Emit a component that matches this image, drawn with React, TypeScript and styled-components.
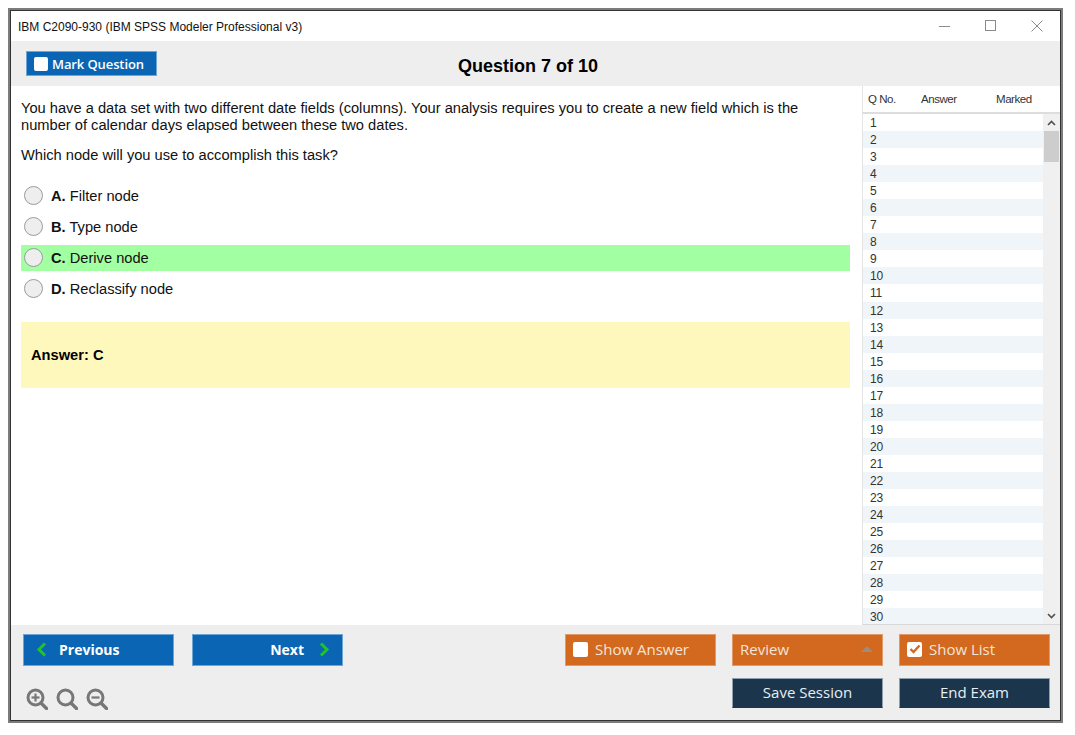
import React from 'react'
import styled, { createGlobalStyle } from 'styled-components'

const GlobalStyle = createGlobalStyle`
  html, body {
    margin: 0;
    padding: 0;
    background: #fff;
  }
  * {
    box-sizing: border-box;
  }
`

const Page = styled.div`
  width: 1075px;
  height: 735px;
  padding: 8px 12px 12px 8px;
`

const Frame = styled.div`
  width: 1055px;
  height: 715px;
  border: 2px solid #7c7c7c;
`

const Window = styled.div`
  height: 100%;
  border: 1px solid #333;
  display: flex;
  flex-direction: column;
  background: #fff;
  font-family: 'Liberation Sans', Arial, sans-serif;
  color: #111;
`

const TitleBar = styled.div`
  height: 30px;
  flex: none;
  display: flex;
  align-items: center;
  justify-content: space-between;
  padding: 1px 17px 0 7px;
  font-size: 12px;
`

const WindowControls = styled.div`
  display: flex;
  align-items: center;
  gap: 35px;
  height: 12px;
  margin-bottom: 2px;
`

const Toolbar = styled.div`
  height: 45px;
  flex: none;
  background: #eee;
  display: flex;
  align-items: center;
  padding-left: 15px;
`

const BlockButton = styled.div`
  display: flex;
  align-items: center;
  font-family: 'Open Sans', 'Noto Sans', sans-serif;
  color: #fff;
  border: 1px solid #6fa5d2;
  background: #0a66b4;
`

const MarkButton = styled(BlockButton)`
  width: 131px;
  height: 25px;
  padding-left: 7px;
  gap: 4px;
  font-size: 13px;
  font-weight: 600;
  letter-spacing: -0.1px;
`

const Box = styled.span<{ $ink: string; $size: number }>`
  width: ${p => p.$size}px;
  height: ${p => p.$size}px;
  flex: none;
  background: #fff;
  border-radius: 2px;
  display: flex;
  align-items: center;
  justify-content: center;
  color: ${p => p.$ink};
`

const ExamTitle = styled.h1`
  margin: 5px 0 0 301px;
  font-size: 18px;
  font-weight: 700;
  color: #000;
`

const Main = styled.div`
  flex: 1;
  min-height: 0;
  display: flex;
`

const QuestionPane = styled.div`
  width: 851px;
  flex: none;
  padding: 14px 12px 0 10px;
  font-size: 14.67px;
  line-height: 17px;
`

const Paragraph = styled.p`
  margin: 0 0 13px;
`

const Options = styled.div`
  margin-top: 19px;
  display: flex;
  flex-direction: column;
  gap: 5px;
`

const Option = styled.div<{ $correct?: boolean }>`
  height: 26px;
  display: flex;
  align-items: center;
  padding-left: 3px;
  gap: 8px;
  background: ${p => (p.$correct ? '#a2ffa2' : 'transparent')};
`

const Radio = styled.span`
  width: 19px;
  height: 19px;
  flex: none;
  margin-bottom: 2px;
  border-radius: 50%;
  border: 1px solid #9a9a9a;
  background: #eee;
`

const AnswerBox = styled.div`
  margin-top: 20px;
  height: 66px;
  display: flex;
  align-items: center;
  padding-left: 10px;
  background: #fff8bc;
  font-weight: 700;
  color: #000;
`

const ListPane = styled.div`
  flex: 1;
  min-width: 0;
  display: flex;
  flex-direction: column;
  border-left: 1px solid #e4e4e4;
  border-bottom: 1px solid #d8d8d8;
  font-size: 12px;
  letter-spacing: -0.2px;
  color: #333;
`

const ListHeader = styled.div`
  height: 28px;
  flex: none;
  display: grid;
  grid-template-columns: 53px 75px 1fr;
  align-items: center;
  padding-left: 5px;
  border-bottom: 2px solid #ddd;
  font-size: 11.5px;
  letter-spacing: -0.45px;
`

const ListBody = styled.div`
  flex: 1;
  min-height: 0;
  display: flex;
  overflow: hidden;
`

const Rows = styled.div`
  flex: 1;
  min-width: 0;
`

const Row = styled.div<{ $odd: boolean }>`
  height: 17.05px;
  padding: 1px 0 0 7px;
  line-height: 17px;
  background: ${p => (p.$odd ? '#f0f5f9' : '#fff')};
`

const Scrollbar = styled.div`
  width: 17px;
  flex: none;
  background: #f0f0f0;
  display: flex;
  flex-direction: column;
  justify-content: space-between;
  position: relative;
`

const ScrollArrow = styled.div`
  height: 17px;
  display: flex;
  align-items: center;
  justify-content: center;
`

const ScrollThumb = styled.div`
  position: absolute;
  top: 17px;
  left: 1px;
  width: 15px;
  height: 31px;
  background: #cdcdcd;
`

const Footer = styled.div`
  height: 95px;
  flex: none;
  background: #eee;
  padding: 9px 10px 0 12px;
  display: flex;
  justify-content: space-between;
`

const FooterLeft = styled.div`
  display: flex;
  flex-direction: column;
`

const NavRow = styled.div`
  display: flex;
  gap: 18px;
`

const NavButton = styled(BlockButton)<{ $end?: boolean }>`
  width: 151px;
  height: 32px;
  padding: 0 12px 1px;
  gap: ${p => (p.$end ? '15px' : '12px')};
  justify-content: ${p => (p.$end ? 'flex-end' : 'flex-start')};
  font-size: 14px;
  font-weight: 700;
`

const ZoomRow = styled.div`
  margin-top: 22px;
  padding-left: 3px;
  display: flex;
  gap: 8px;
`

const ActionGrid = styled.div`
  display: grid;
  grid-template-columns: repeat(3, 151px);
  grid-template-rows: 32px 30px;
  column-gap: 16px;
  row-gap: 12px;
`

const OrangeButton = styled(BlockButton)`
  height: 32px;
  padding: 0 7px 2px;
  gap: 7px;
  border-color: #e09a68;
  background: #d2691f;
  font-size: 15px;
  color: #f5e4d6;
`

const ReviewButton = styled(OrangeButton)`
  justify-content: space-between;
  padding-right: 9px;
`

const Caret = styled.span`
  width: 0;
  height: 0;
  border-left: 6px solid transparent;
  border-right: 6px solid transparent;
  border-bottom: 6px solid #a08a7a;
`

const NavyButton = styled(BlockButton)`
  height: 30px;
  padding-bottom: 2px;
  justify-content: center;
  border-color: #8ea0ae;
  border-bottom-color: #1b364c;
  background: #1b364c;
  font-size: 15px;
  color: #e8eef2;
`

const Spacer = styled.div``

const ZoomIcon = ({ mark }: { mark: 'plus' | 'minus' | 'none' }) => (
  <svg width="22" height="22" viewBox="0 0 22 22" fill="none" stroke="#777">
    <circle cx="9.5" cy="9.5" r="7.5" strokeWidth="3" />
    <path d="M15 15l5.5 5.5" strokeWidth="3.4" strokeLinecap="round" />
    {mark !== 'none' && <path d="M5.5 9.5h8" strokeWidth="2.2" />}
    {mark === 'plus' && <path d="M9.5 5.5v8" strokeWidth="2.2" />}
  </svg>
)

const Chevron = ({ left }: { left?: boolean }) => (
  <svg width="11" height="15" viewBox="0 0 11 15" fill="none" stroke="#22c32a" strokeWidth="3">
    <path d={left ? 'M9 1.5L3 7.5l6 6' : 'M2 1.5l6 6-6 6'} />
  </svg>
)

const ScrollChevron = ({ up }: { up?: boolean }) => (
  <svg width="9" height="6" viewBox="0 0 9 6" fill="none" stroke="#505050" strokeWidth="1.6">
    <path d={up ? 'M1 5l3.5-3.5L8 5' : 'M1 1l3.5 3.5L8 1'} />
  </svg>
)

const options = [
  { key: 'A.', text: 'Filter node' },
  { key: 'B.', text: 'Type node' },
  { key: 'C.', text: 'Derive node', correct: true },
  { key: 'D.', text: 'Reclassify node' },
]

const rows = Array.from({ length: 30 }, (_, i) => i + 1)

const App: React.FC = () => {
  return (
    <Page>
      <GlobalStyle />
      <Frame>
        <Window>
          <TitleBar>
            <span>IBM C2090-930 (IBM SPSS Modeler Professional v3)</span>
            <WindowControls>
              <svg width="11" height="12" viewBox="0 0 11 12" stroke="#8a8a8a">
                <path d="M0 6.5h11" />
              </svg>
              <svg width="11" height="12" viewBox="0 0 11 12" fill="none" stroke="#8a8a8a">
                <rect x="0.5" y="0.5" width="10" height="10" />
              </svg>
              <svg width="12" height="12" viewBox="0 0 12 12" stroke="#8a8a8a">
                <path d="M0.5 0.5l11 11M11.5 0.5l-11 11" />
              </svg>
            </WindowControls>
          </TitleBar>
          <Toolbar>
            <MarkButton>
              <Box $ink="#0a66b4" $size={14} />
              Mark Question
            </MarkButton>
            <ExamTitle>Question 7 of 10</ExamTitle>
          </Toolbar>
          <Main>
            <QuestionPane>
              <Paragraph>
                You have a data set with two different date fields (columns). Your analysis requires you to create a
                new field which is the number of calendar days elapsed between these two dates.
              </Paragraph>
              <Paragraph>Which node will you use to accomplish this task?</Paragraph>
              <Options>
                {options.map(o => (
                  <Option key={o.key} $correct={o.correct}>
                    <Radio />
                    <span>
                      <b>{o.key}</b> {o.text}
                    </span>
                  </Option>
                ))}
              </Options>
              <AnswerBox>Answer: C</AnswerBox>
            </QuestionPane>
            <ListPane>
              <ListHeader>
                <span>Q No.</span>
                <span>Answer</span>
                <span>Marked</span>
              </ListHeader>
              <ListBody>
                <Rows>
                  {rows.map(n => (
                    <Row key={n} $odd={n % 2 === 0}>
                      {n}
                    </Row>
                  ))}
                </Rows>
                <Scrollbar>
                  <ScrollArrow>
                    <ScrollChevron up />
                  </ScrollArrow>
                  <ScrollThumb />
                  <ScrollArrow>
                    <ScrollChevron />
                  </ScrollArrow>
                </Scrollbar>
              </ListBody>
            </ListPane>
          </Main>
          <Footer>
            <FooterLeft>
              <NavRow>
                <NavButton>
                  <Chevron left />
                  Previous
                </NavButton>
                <NavButton $end>
                  Next
                  <Chevron />
                </NavButton>
              </NavRow>
              <ZoomRow>
                <ZoomIcon mark="plus" />
                <ZoomIcon mark="none" />
                <ZoomIcon mark="minus" />
              </ZoomRow>
            </FooterLeft>
            <ActionGrid>
              <OrangeButton>
                <Box $ink="#d2691f" $size={15} />
                Show Answer
              </OrangeButton>
              <ReviewButton>
                Review
                <Caret />
              </ReviewButton>
              <OrangeButton>
                <Box $ink="#d2691f" $size={15}>
                  <svg width="12" height="10" viewBox="0 0 12 10" fill="none" stroke="#d2691f" strokeWidth="2.4">
                    <path d="M1.5 5l3 3 6-6.5" />
                  </svg>
                </Box>
                Show List
              </OrangeButton>
              <Spacer />
              <NavyButton>Save Session</NavyButton>
              <NavyButton>End Exam</NavyButton>
            </ActionGrid>
          </Footer>
        </Window>
      </Frame>
    </Page>
  )
}

export default App
